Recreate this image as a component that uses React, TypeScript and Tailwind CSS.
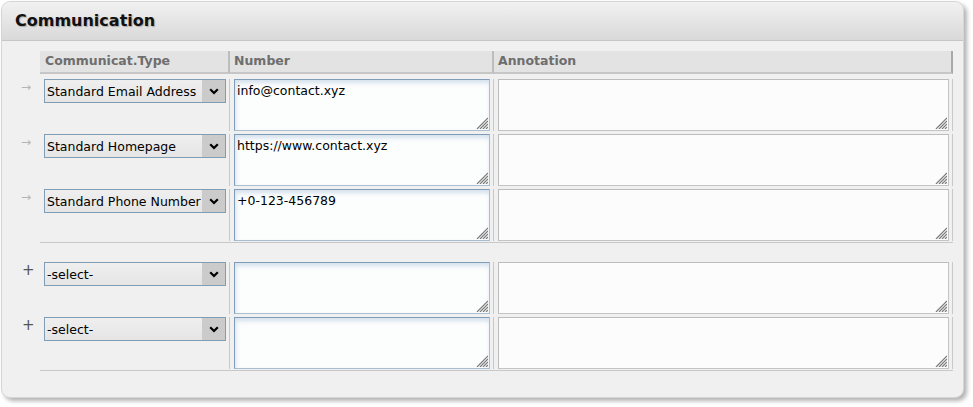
import React from "react";

type Row = { kind: "saved" | "new"; type: string; number: string };

const rows: Row[] = [
  { kind: "saved", type: "Standard Email Address", number: "info@contact.xyz" },
  { kind: "saved", type: "Standard Homepage", number: "https://www.contact.xyz" },
  { kind: "saved", type: "Standard Phone Number", number: "+0-123-456789" },
];

const newRows: Row[] = [
  { kind: "new", type: "-select-", number: "" },
  { kind: "new", type: "-select-", number: "" },
];

function Grip() {
  return (
    <svg
      className="pointer-events-none absolute bottom-[2px] right-[2px]"
      width="12"
      height="12"
      viewBox="0 0 12 12"
    >
      {[1, 4, 7, 10].map((k) => (
        <line key={k} x1={k} y1="12" x2="12" y2={k} stroke="#7a7a7a" strokeWidth="1.2" />
      ))}
    </svg>
  );
}

function Select({ value }: { value: string }) {
  return (
    <div className="flex h-[24px] w-[182px] border border-[#7f9db5] bg-gradient-to-b from-[#efefef] to-[#e5e5e5]">
      <div className="flex-1 overflow-hidden whitespace-nowrap pl-[2px] pt-[1px] leading-[21px] text-black">
        {value}
      </div>
      <div className="flex w-[23px] shrink-0 items-center justify-center bg-[#cbcbcb]">
        <svg width="10" height="7" viewBox="0 0 10 7">
          <path d="M1.2 1.2 L5 5 L8.8 1.2" fill="none" stroke="#000" strokeWidth="2.2" />
        </svg>
      </div>
    </div>
  );
}

function NumberBox({ value }: { value: string }) {
  return (
    <div className="relative h-[52px] w-[256px]">
      <textarea
        readOnly
        defaultValue={value}
        className="block h-full w-full resize-none border border-[#a9bed0] border-l-[#7f9db9] border-t-[#7f9db9] bg-[#fcfdfd] px-[2px] pt-[3px] leading-[16px] text-black shadow-[inset_1px_3px_4px_rgba(120,160,200,0.3)] outline-none"
      />
      <Grip />
    </div>
  );
}

function AnnotationBox() {
  return (
    <div className="relative h-[52px] w-[451px]">
      <textarea
        readOnly
        className="block h-full w-full resize-none border border-[#c4c4c4] border-l-[#bcbcbc] border-t-[#bcbcbc] bg-[#fcfcfc] px-[2px] pt-[2px] outline-none"
      />
      <Grip />
    </div>
  );
}

function DataRow({ row, padTop, padBottom }: { row: Row; padTop: string; padBottom: string }) {
  return (
    <div className={`flex ${padTop} ${padBottom}`}>
      <div className="w-[38px] shrink-0 pl-[19px]">
        {row.kind === "saved" ? (
          <span className="block text-[12px] leading-[16px] text-[#b4b4b4]">→</span>
        ) : (
          <span className="block pl-[1px] text-[15px] leading-[16px] text-[#555]">+</span>
        )}
      </div>
      <div className="w-[190px] shrink-0 border-r border-[#c8c8c8] pl-[4px]">
        <Select value={row.type} />
      </div>
      <div className="w-[264px] shrink-0 border-r border-[#c8c8c8] pl-[4px]">
        <NumberBox value={row.number} />
      </div>
      <div className="w-[459px] shrink-0 border-r border-[#c8c8c8] pl-[4px]">
        <AnnotationBox />
      </div>
    </div>
  );
}

export default function App() {
  return (
    <div className="min-h-screen bg-white pl-[1px] pt-[1px] font-['DejaVu_Sans',Verdana,sans-serif] text-[12.5px]">
      <div className="h-[397px] w-[963px] overflow-hidden rounded-[9px] border border-[#d6d6d6] bg-[#f0f0f0] shadow-[3px_3px_4px_rgba(0,0,0,0.3)]">
        {/* header */}
        <div className="flex h-[39px] items-center border-b border-[#c6c6c6] bg-gradient-to-b from-[#f1f1f1] to-[#d9d9d9] pl-[13px]">
          <h1 className="text-[16px] font-bold text-[#111] [text-shadow:1px_1px_1px_rgba(0,0,0,0.25)]">
            Communication
          </h1>
        </div>

        <div className="pt-[10px]">
          {/* column headings */}
          <div className="flex">
            <div className="w-[38px] shrink-0" />
            <div className="flex h-[23px] w-[190px] shrink-0 items-center border-b-2 border-r-2 border-[#bdbdbd] border-b-[#c6c6c6] bg-[#e3e3e3] pl-[5px] font-bold text-[#6e6e6e]">
              Communicat.Type
            </div>
            <div className="flex h-[23px] w-[264px] shrink-0 items-center border-b-2 border-r-2 border-[#bdbdbd] border-b-[#c6c6c6] bg-[#e3e3e3] pl-[4px] font-bold text-[#6e6e6e]">
              Number
            </div>
            <div className="flex h-[23px] w-[459px] shrink-0 items-center border-b-2 border-r-2 border-[#a9a9a9] border-b-[#c6c6c6] bg-[#e3e3e3] pl-[4px] font-bold text-[#6e6e6e]">
              Annotation
            </div>
          </div>

          {/* existing entries */}
          {rows.map((r, i) => (
            <DataRow
              key={i}
              row={r}
              padTop={i === 0 ? "pt-[5px]" : "pt-[3px]"}
              padBottom={i === rows.length - 1 ? "pb-[1px]" : "pb-0"}
            />
          ))}
          <div className="ml-[38px] h-px w-[913px] bg-[#c8c8c8]" />

          {/* new entries */}
          <div className="mt-[17px]">
            {newRows.map((r, i) => (
              <DataRow
                key={i}
                row={r}
                padTop={i === 0 ? "pt-[2px]" : "pt-[3px]"}
                padBottom={i === newRows.length - 1 ? "pb-[1px]" : "pb-0"}
              />
            ))}
            <div className="ml-[38px] h-px w-[913px] bg-[#c8c8c8]" />
          </div>
        </div>
      </div>
    </div>
  );
}
